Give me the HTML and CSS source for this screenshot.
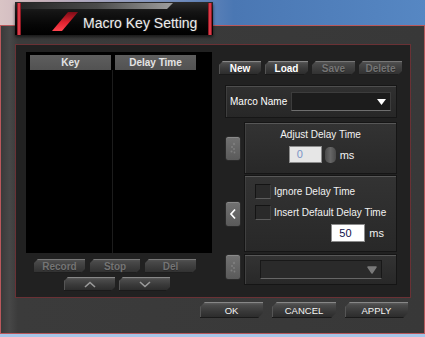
FILE: index.html
```html
<!DOCTYPE html>
<html lang="en">
<head>
    <meta charset="UTF-8">
    <meta name="viewport" content="width=device-width, initial-scale=1.0">
    <title>Macro Key Setting</title>
    <link rel="stylesheet" href="styles.css">
</head>
<body>
    <div class="title-tab">
        <span class="tab-bar tab-bar-left"></span>
        <svg class="tab-slash" width="198" height="33" viewBox="0 0 198 33">
            <defs>
                <linearGradient id="slashRed" x1="0" y1="0" x2="0" y2="1">
                    <stop offset="0" stop-color="#7a0c16"/>
                    <stop offset="0.55" stop-color="#e0232f"/>
                    <stop offset="1" stop-color="#ff4550"/>
                </linearGradient>
            </defs>
            <polygon points="53,10 63,10 47,29 37,29" fill="url(#slashRed)"/>
        </svg>
        <span class="tab-title">Macro Key Setting</span>
        <span class="tab-bar tab-bar-right"></span>
    </div>

    <div class="window">
        <div class="panel">
            <div class="left-col">
                <div class="macro-list">
                    <div class="list-head">
                        <div class="head-cell">Key</div>
                        <div class="head-cell">Delay Time</div>
                    </div>
                    <div class="list-body">
                        <div class="list-col"></div>
                    </div>
                </div>
                <div class="btn-row rec-row">
                    <div class="btn off w51">Record</div>
                    <div class="btn off w50">Stop</div>
                    <div class="btn off w51">Del</div>
                </div>
                <div class="btn-row arrow-row">
                    <div class="btn w51">
                        <svg width="12" height="7" viewBox="0 0 12 7"><polyline points="1,6 6,1.5 11,6" fill="none" stroke="#9a9a9a" stroke-width="1.6"/></svg>
                    </div>
                    <div class="btn w51">
                        <svg width="12" height="7" viewBox="0 0 12 7"><polyline points="1,1 6,5.5 11,1" fill="none" stroke="#9a9a9a" stroke-width="1.6"/></svg>
                    </div>
                </div>
            </div>

            <div class="right-col">
                <div class="btn-row file-row">
                    <div class="btn w42">New</div>
                    <div class="btn w43">Load</div>
                    <div class="btn off w43">Save</div>
                    <div class="btn off w43">Delete</div>
                </div>

                <div class="name-box">
                    <span>Marco Name</span>
                    <div class="name-select">
                        <svg width="9" height="6" viewBox="0 0 9 6"><polygon points="0,0 9,0 4.5,6" fill="#fff"/></svg>
                    </div>
                </div>

                <div class="delay-row row-adjust">
                    <div class="side-btn h25">
                        <svg width="8" height="12" viewBox="0 0 8 12" fill="#7d7d7d"><circle cx="5" cy="2" r="1.2"/><circle cx="3" cy="5" r="1.1"/><circle cx="5" cy="7" r="1"/><circle cx="2.5" cy="9.5" r="1"/><circle cx="5.5" cy="10.5" r="0.9"/></svg>
                    </div>
                    <div class="delay-panel adjust-panel">
                        <div class="adjust-title">Adjust Delay Time</div>
                        <div class="ms-line centered">
                            <div class="num-box dim">0</div>
                            <div class="spin"></div>
                            <span class="ms">ms</span>
                        </div>
                    </div>
                </div>

                <div class="delay-row row-options">
                    <div class="side-btn h26">
                        <svg width="8" height="12" viewBox="0 0 8 12"><polyline points="6,1.5 2,6 6,10.5" fill="none" stroke="#fff" stroke-width="1.7"/></svg>
                    </div>
                    <div class="delay-panel options-panel">
                        <div class="check-line">
                            <span class="check"></span>
                            <span>Ignore Delay Time</span>
                        </div>
                        <div class="check-line second">
                            <span class="check"></span>
                            <span>Insert Default Delay Time</span>
                        </div>
                        <div class="ms-line right">
                            <div class="num-box">50</div>
                            <span class="ms">ms</span>
                        </div>
                    </div>
                </div>

                <div class="delay-row row-select">
                    <div class="side-btn h26">
                        <svg width="8" height="12" viewBox="0 0 8 12" fill="#7d7d7d"><circle cx="5" cy="2" r="1.2"/><circle cx="3" cy="5" r="1.1"/><circle cx="5" cy="7" r="1"/><circle cx="2.5" cy="9.5" r="1"/><circle cx="5.5" cy="10.5" r="0.9"/></svg>
                    </div>
                    <div class="delay-panel select-panel">
                        <div class="select-off">
                            <svg width="10" height="8" viewBox="0 0 10 8"><path d="M1,1 H9 L5,7 Z" fill="#7a7a7a" stroke="#7a7a7a" stroke-linejoin="round" stroke-width="1.5"/></svg>
                        </div>
                    </div>
                </div>
            </div>
        </div>

        <div class="footer-row">
            <div class="btn big w63">OK</div>
            <div class="btn big w64">CANCEL</div>
            <div class="btn big w63">APPLY</div>
        </div>
    </div>
</body>
</html>
```

FILE: styles.css
```css
* {
    box-sizing: border-box;
}

body {
    position: relative;
    margin: 0;
    width: 425px;
    height: 337px;
    overflow: hidden;
    font-family: "Liberation Sans", Arial, sans-serif;
    font-size: 10px;
    color: #f2f2f2;
    background:
        linear-gradient(to bottom, transparent 333px, #a6c6e8 333px),
        linear-gradient(to right, #d9c4c5 0, #c9b2bb 10%, #8a9bc4 35%, #4a77b3 55%, #5687c3 100%);
}

/* title tab */

.title-tab {
    position: absolute;
    left: 15px;
    top: 2px;
    z-index: 2;
    width: 198px;
    height: 33px;
    background: linear-gradient(#2a2a2a 0, #141414 30%, #060606 70%, #000 100%);
    box-shadow: 0 2px 3px rgba(0, 0, 0, 0.6);
}

.title-tab::before {
    content: "";
    position: absolute;
    left: 6px;
    top: 1px;
    width: 152px;
    height: 6px;
    background: linear-gradient(to right, #262626, #4a4a4a 50%, #9a9a9a 97%);
    clip-path: polygon(0 0, 100% 0, calc(100% - 6px) 100%, 0 100%);
}

.tab-bar {
    position: absolute;
    top: 1px;
    width: 4px;
    height: 32px;
    background: linear-gradient(to right, #6e0b15, #ff4a58 50%, #6e0b15);
}

.tab-bar-left {
    left: 2px;
}

.tab-bar-right {
    left: 193px;
}

.tab-slash {
    position: absolute;
    left: 0;
    top: 0;
}

.tab-title {
    display: block;
    padding: 13px 0 0 68px;
    font-size: 14px;
    line-height: 16px;
    color: #ececec;
    text-shadow: 0 0 2px rgba(255, 255, 255, 0.25);
}

/* window */

.window {
    margin-top: 25px;
    height: 309px;
    border: 1px solid #b9585c;
    background: linear-gradient(to right, #3a3a3a 0, #474747 2%, #3b3b3b 4%, #383838 100%);
    padding: 18px 13px 0 14px;
}

.panel {
    display: flex;
    height: 254px;
    border: 1px solid #6a3135;
    background: #212121;
    padding: 7px 0 0 10px;
}

.left-col {
    width: 186px;
    display: flex;
    flex-direction: column;
}

.macro-list {
    height: 201px;
    background: #000;
    padding: 3px 4px 0;
    display: flex;
    flex-direction: column;
}

.list-head {
    display: flex;
    gap: 4px;
}

.head-cell {
    width: 81px;
    height: 15px;
    line-height: 15px;
    text-align: center;
    font-weight: bold;
    color: #e4e4e4;
    background: linear-gradient(#5e5e5e, #525252);
}

.list-body {
    flex: 1;
}

.list-col {
    width: 83px;
    height: 100%;
    border-right: 1px solid #1c1c1c;
}

/* buttons */

.btn-row {
    display: flex;
}

.btn {
    display: flex;
    align-items: center;
    justify-content: center;
    height: 14px;
    font-weight: bold;
    color: #fff;
    background: linear-gradient(#626262 0, #4a4a4a 20%, #383838 60%, #2a2a2a 100%);
    box-shadow: inset 0 1px #878787, inset 0 -1px #1a1a1a, inset 1px 0 #555;
    clip-path: polygon(4px 0, 100% 0, 100% calc(100% - 4px), calc(100% - 4px) 100%, 0 100%, 0 4px);
}

.btn.off {
    color: #747474;
    text-shadow: 0 1px #2a2a2a;
    background: linear-gradient(#555 0, #474747 25%, #3a3a3a 65%, #303030 100%);
    box-shadow: inset 0 1px #777, inset 0 -1px #1e1e1e;
}

.btn.big {
    height: 16px;
    font-weight: normal;
    font-size: 9.5px;
    color: #f4f4f4;
    clip-path: polygon(5px 0, 100% 0, 100% calc(100% - 5px), calc(100% - 5px) 100%, 0 100%, 0 5px);
}

.w42 { width: 42px; }
.w43 { width: 43px; }
.w50 { width: 50px; }
.w51 { width: 51px; }
.w63 { width: 63px; }
.w64 { width: 64px; }

.rec-row {
    margin-top: 6px;
    padding-left: 8px;
    gap: 5px;
}

.arrow-row {
    margin-top: 4px;
    padding-left: 38px;
    gap: 4px;
}

.right-col {
    width: 184px;
    margin-left: 7px;
    padding-top: 9px;
}

.file-row {
    gap: 4px;
}

.name-box {
    display: flex;
    align-items: center;
    justify-content: space-between;
    width: 172px;
    height: 33px;
    margin: 10px 0 0 6px;
    padding: 0 5px 0 4px;
    border: 1px solid #161616;
    background: linear-gradient(#303030, #272727);
    box-shadow: inset 0 1px #4e4e4e, inset 1px 0 #3e3e3e;
    color: #fff;
}

.name-select {
    display: flex;
    align-items: center;
    justify-content: flex-end;
    width: 100px;
    height: 19px;
    padding-right: 4px;
    background: #1c1c1c;
    border: 1px solid #3c3c3c;
    border-bottom-color: #6e6e6e;
}

/* delay rows */

.delay-row {
    display: flex;
    align-items: center;
    gap: 3px;
    margin-left: 6px;
}

.row-adjust {
    margin-top: 4px;
}

.row-options {
    margin-top: 1px;
}

.row-select {
    margin-top: 2px;
    align-items: flex-start;
}

.side-btn {
    display: flex;
    align-items: center;
    justify-content: center;
    width: 16px;
    border-radius: 3px;
    border: 1px solid #2a2a2a;
    background: linear-gradient(#727272, #5a5a5a);
    box-shadow: inset 0 1px #8a8a8a;
}

.h25 { height: 25px; }
.h26 { height: 26px; }

.delay-panel {
    width: 153px;
    border: 1px solid #151515;
    background: linear-gradient(#333, #282828);
    box-shadow: inset 0 1px #575757, inset 1px 0 #404040;
}

.adjust-panel {
    height: 52px;
    padding-top: 5px;
}

.adjust-title {
    text-align: center;
    line-height: 13px;
}

.ms-line {
    display: flex;
    align-items: center;
}

.ms-line.centered {
    justify-content: center;
    margin-top: 5px;
    padding-left: 2px;
}

.ms-line.right {
    justify-content: flex-end;
    margin-top: 4px;
    padding-right: 12px;
}

.num-box {
    width: 34px;
    height: 18px;
    padding-left: 7px;
    line-height: 16px;
    font-size: 11px;
    color: #10104a;
    background: #fff;
    border: 1px solid #8c8c8c;
}

.num-box.dim {
    width: 33px;
    height: 17px;
    line-height: 15px;
    color: #7b95c6;
    background: #e6e6e6;
}

.spin {
    width: 11px;
    height: 16px;
    margin-left: 3px;
    border-radius: 5px;
    background: linear-gradient(to right, #4a4a4a, #666 50%, #4a4a4a);
}

.ms {
    margin-left: 4px;
    font-size: 11px;
}

.options-panel {
    height: 77px;
    padding: 8px 0 0 10px;
}

.check-line {
    display: flex;
    align-items: center;
    gap: 3px;
    height: 15px;
}

.check-line.second {
    margin-top: 6px;
}

.check {
    width: 16px;
    height: 15px;
    background: #2a2a2a;
    border: 1px solid #141414;
    border-bottom-color: #5c5c5c;
    border-right-color: #3e3e3e;
}

.select-panel {
    height: 31px;
    padding: 5px 0 0 15px;
}

.select-off {
    display: flex;
    align-items: center;
    justify-content: flex-end;
    width: 122px;
    height: 19px;
    padding-right: 4px;
    background: #2a2a2a;
    border: 1px solid #181818;
    border-bottom-color: #666;
}

/* footer */

.footer-row {
    display: flex;
    justify-content: flex-end;
    gap: 9px;
    margin-top: 4px;
    padding-right: 3px;
}
```
